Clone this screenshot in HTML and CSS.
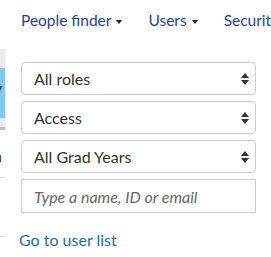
FILE: index.html
```html
<!DOCTYPE html>
<html lang="en">
<head>
  <meta charset="UTF-8" />
  <title>People finder</title>
  <link rel="stylesheet" href="styles.css">
</head>
<body>
  <div class="page">
    <div class="side">
      <div class="side-top"></div>
      <div class="side-active">v</div>
      <div class="side-foot"></div>
      <div class="side-letter">n</div>
      <div class="side-rule first"></div>
      <div class="side-rule"></div>
    </div>

    <div class="main">
      <nav class="nav">
        <a class="nav-item">People finder<span class="caret"></span></a>
        <a class="nav-item">Users<span class="caret"></span></a>
        <a class="nav-item">Security</a>
      </nav>

      <form class="finder">
        <div class="select">
          <select><option>All roles</option></select>
          <svg class="arrows" width="8" height="12" viewBox="0 0 8 12"><path d="M4 0L8 5H0z M0 7H8L4 12z" fill="#333"/></svg>
        </div>
        <div class="select">
          <select><option>Access</option></select>
          <svg class="arrows" width="8" height="12" viewBox="0 0 8 12"><path d="M4 0L8 5H0z M0 7H8L4 12z" fill="#333"/></svg>
        </div>
        <div class="select">
          <select><option>All Grad Years</option></select>
          <svg class="arrows" width="8" height="12" viewBox="0 0 8 12"><path d="M4 0L8 5H0z M0 7H8L4 12z" fill="#333"/></svg>
        </div>
        <input type="text" class="search" placeholder="Type a name, ID or email" />
      </form>

      <a class="user-list">Go to user list</a>
    </div>
  </div>
</body>
</html>
```

FILE: styles.css
```css
body {
  margin: 0;
  font-family: 'Lato', sans-serif;
  background: #fff;
  color: #333;
  overflow: hidden;
}

.page {
  display: flex;
  height: 257px;
}

.side {
  width: 5px;
  overflow: hidden;
  flex-shrink: 0;
  padding-top: 49px;
}

.side-top {
  height: 19px;
  background: #ebebeb;
}

.side-active {
  height: 50px;
  background: #7ecbf2;
  color: #333;
  font-size: 16px;
  line-height: 40px;
  text-indent: -6px;
}

.side-foot {
  height: 9px;
  background: #ebebeb;
  border-bottom: 3px solid #bdbdbd;
}

.side-letter {
  margin-top: 16px;
  font-size: 16px;
  line-height: 20px;
  text-indent: -7px;
  color: #333;
}

.side-rule {
  height: 1px;
  background: #d6d6d6;
  margin-top: 58px;
}

.side-rule.first {
  margin-top: 11px;
}

.main {
  flex: 1;
  padding-left: 16px;
  min-width: 0;
}

.nav {
  display: flex;
  gap: 26px;
  height: 44px;
  padding-top: 10px;
  box-sizing: border-box;
  white-space: nowrap;
}

.nav-item {
  color: #2442a4;
  font-size: 15.5px;
  line-height: 20px;
}

.caret {
  display: inline-block;
  width: 0;
  height: 0;
  margin-left: 5px;
  vertical-align: middle;
  border-left: 3px solid transparent;
  border-right: 3px solid transparent;
  border-top: 4px solid #222;
}

.finder {
  margin-top: 18px;
  width: 235px;
  display: flex;
  flex-direction: column;
  gap: 6px;
}

.select {
  position: relative;
}

.select select {
  appearance: none;
  width: 100%;
  height: 33px;
  padding: 0 12px;
  border: 1px solid #ccc;
  border-radius: 4px;
  background: #fff;
  font-family: 'Lato', sans-serif;
  font-size: 16px;
  color: #333;
}

.arrows {
  position: absolute;
  right: 7px;
  top: 11px;
}

.search {
  height: 34px;
  box-sizing: border-box;
  padding: 0 12px;
  border: 1px solid #ccc;
  border-radius: 0;
  font-family: 'Lato', sans-serif;
  font-size: 16px;
}

.search::placeholder {
  font-style: italic;
  color: #666;
}

.user-list {
  display: block;
  margin-top: 17px;
  margin-left: -2px;
  color: #1e6ea6;
  font-size: 16px;
  line-height: 20px;
}
```
